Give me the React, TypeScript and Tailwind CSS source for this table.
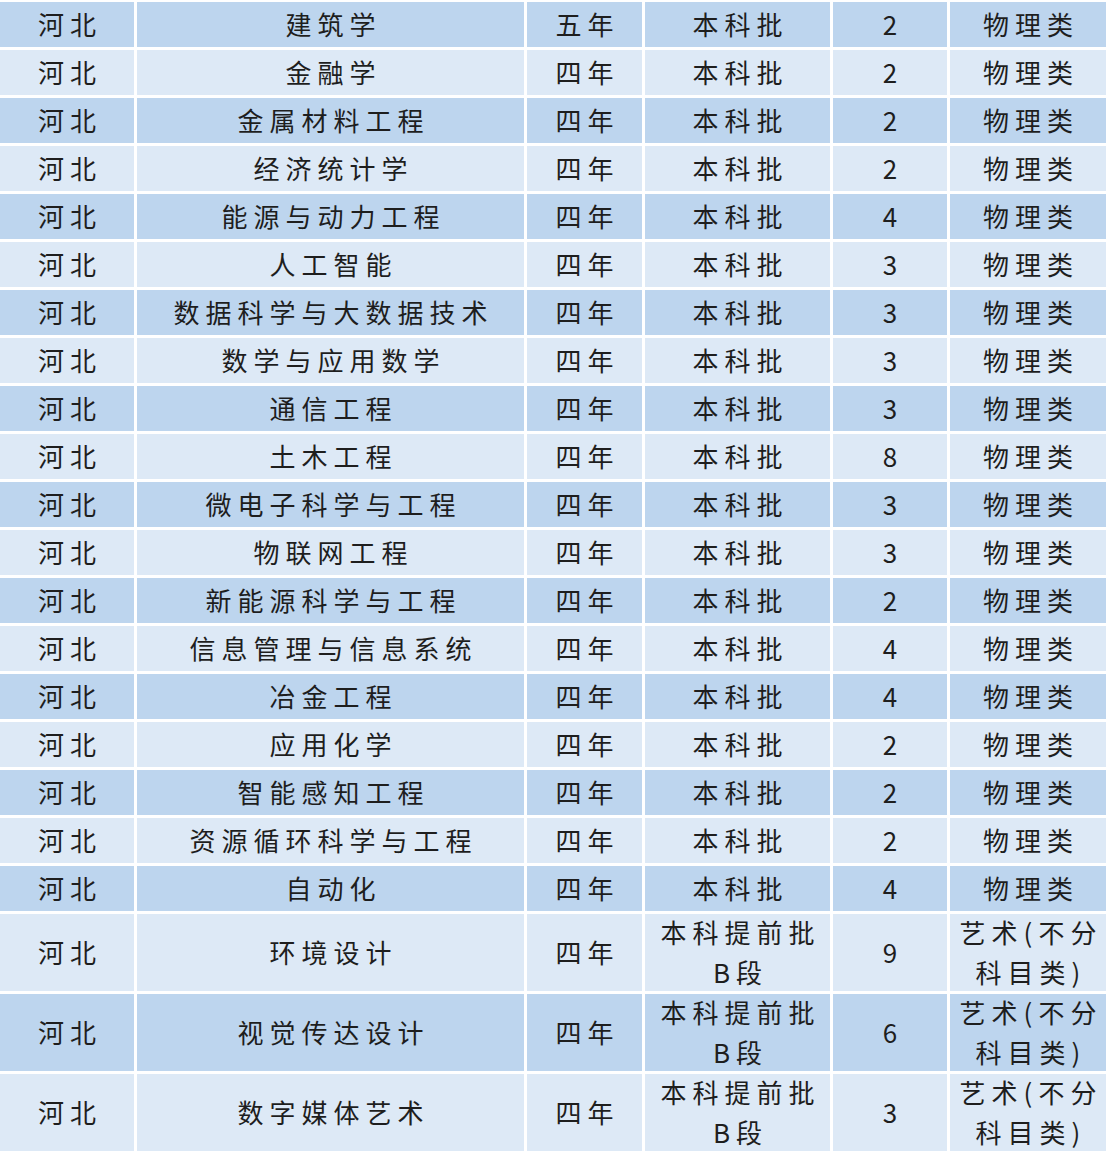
import React from "react";

type Row = {
  major: string;
  years: string;
  batch: string;
  count: number;
  subject: string;
};

const rows: Row[] = [
  { major: "建筑学", years: "五年", batch: "本科批", count: 2, subject: "物理类" },
  { major: "金融学", years: "四年", batch: "本科批", count: 2, subject: "物理类" },
  { major: "金属材料工程", years: "四年", batch: "本科批", count: 2, subject: "物理类" },
  { major: "经济统计学", years: "四年", batch: "本科批", count: 2, subject: "物理类" },
  { major: "能源与动力工程", years: "四年", batch: "本科批", count: 4, subject: "物理类" },
  { major: "人工智能", years: "四年", batch: "本科批", count: 3, subject: "物理类" },
  { major: "数据科学与大数据技术", years: "四年", batch: "本科批", count: 3, subject: "物理类" },
  { major: "数学与应用数学", years: "四年", batch: "本科批", count: 3, subject: "物理类" },
  { major: "通信工程", years: "四年", batch: "本科批", count: 3, subject: "物理类" },
  { major: "土木工程", years: "四年", batch: "本科批", count: 8, subject: "物理类" },
  { major: "微电子科学与工程", years: "四年", batch: "本科批", count: 3, subject: "物理类" },
  { major: "物联网工程", years: "四年", batch: "本科批", count: 3, subject: "物理类" },
  { major: "新能源科学与工程", years: "四年", batch: "本科批", count: 2, subject: "物理类" },
  { major: "信息管理与信息系统", years: "四年", batch: "本科批", count: 4, subject: "物理类" },
  { major: "冶金工程", years: "四年", batch: "本科批", count: 4, subject: "物理类" },
  { major: "应用化学", years: "四年", batch: "本科批", count: 2, subject: "物理类" },
  { major: "智能感知工程", years: "四年", batch: "本科批", count: 2, subject: "物理类" },
  { major: "资源循环科学与工程", years: "四年", batch: "本科批", count: 2, subject: "物理类" },
  { major: "自动化", years: "四年", batch: "本科批", count: 4, subject: "物理类" },
  { major: "环境设计", years: "四年", batch: "本科提前批\nB段", count: 9, subject: "艺术(不分\n科目类)" },
  { major: "视觉传达设计", years: "四年", batch: "本科提前批\nB段", count: 6, subject: "艺术(不分\n科目类)" },
  { major: "数字媒体艺术", years: "四年", batch: "本科提前批\nB段", count: 3, subject: "艺术(不分\n科目类)" },
];

const Cell: React.FC<{ blue: boolean; tall: boolean; children: React.ReactNode }> = ({
  blue,
  tall,
  children,
}) => (
  <div
    className={`flex items-center justify-center text-center whitespace-pre-line pl-[6px] tracking-[6px] ${
      tall ? "h-[77px] leading-[40px] pb-[2px]" : "h-[45px] pb-[3px]"
    } ${blue ? "bg-[#bdd5ee]" : "bg-[#dde9f6]"}`}
  >
    {children}
  </div>
);

export default function App() {
  return (
    <div className="w-[1108px] h-[1156px] bg-white pt-[2px] font-['Noto_Sans_CJK_SC',sans-serif] text-[26px] text-[#1e1e1e]">
      <div className="grid grid-cols-[134px_387px_115px_185px_114px_156px] gap-[3px]">
        {rows.map((r, i) => {
          const blue = i % 2 === 0;
          const tall = r.batch.includes("\n");
          return (
            <React.Fragment key={i}>
              <Cell blue={blue} tall={tall}>河北</Cell>
              <Cell blue={blue} tall={tall}>{r.major}</Cell>
              <Cell blue={blue} tall={tall}>{r.years}</Cell>
              <Cell blue={blue} tall={tall}>{r.batch}</Cell>
              <Cell blue={blue} tall={tall}>{r.count}</Cell>
              <Cell blue={blue} tall={tall}>{r.subject}</Cell>
            </React.Fragment>
          );
        })}
      </div>
    </div>
  );
}
